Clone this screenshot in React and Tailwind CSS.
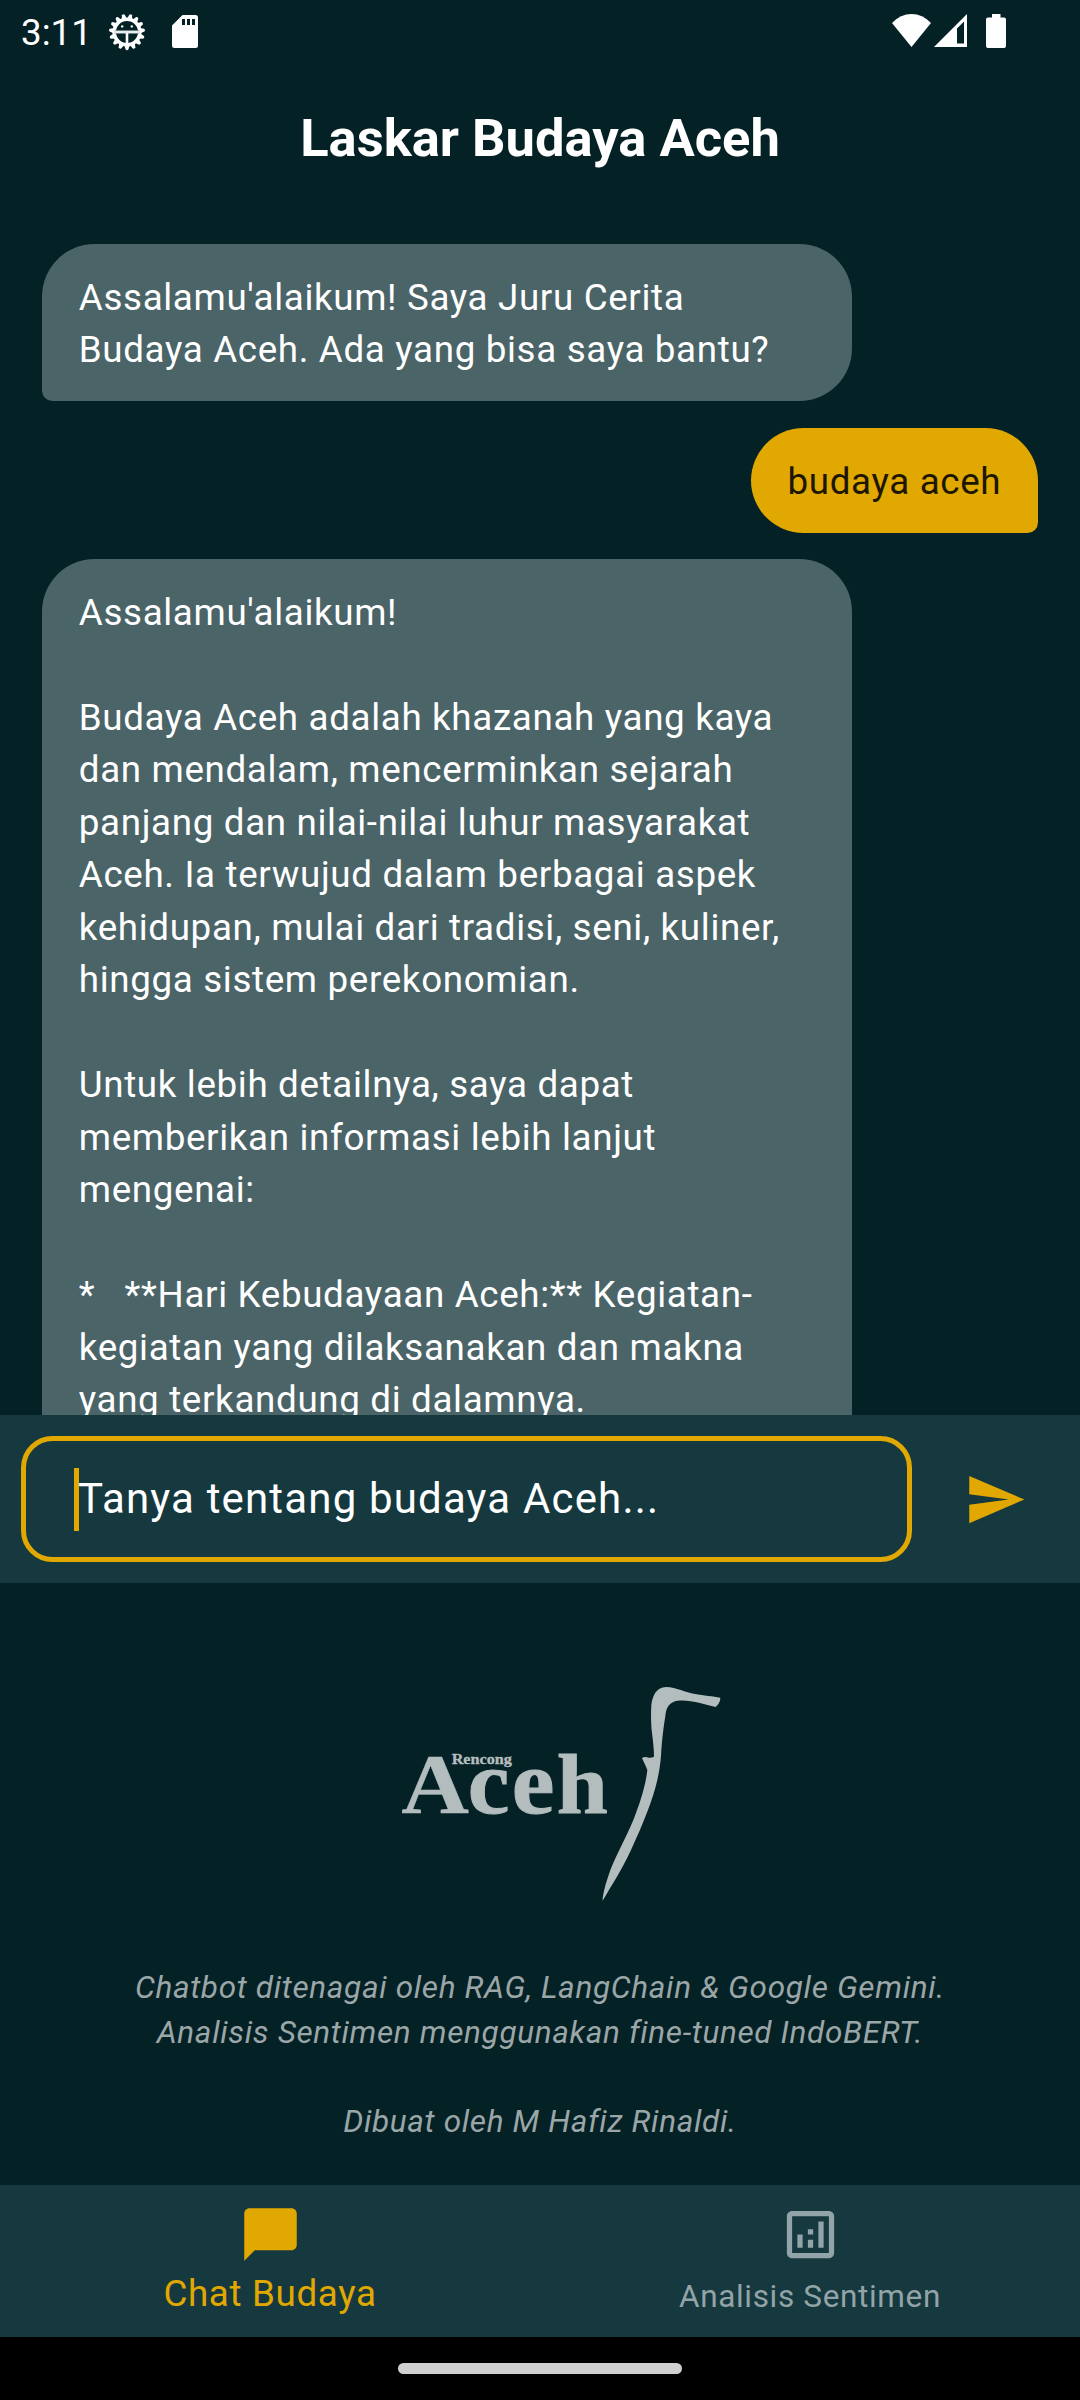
const reply = [
  "Assalamu'alaikum!",
  "",
  "Budaya Aceh adalah khazanah yang kaya",
  "dan mendalam, mencerminkan sejarah",
  "panjang dan nilai-nilai luhur masyarakat",
  "Aceh. Ia terwujud dalam berbagai aspek",
  "kehidupan, mulai dari tradisi, seni, kuliner,",
  "hingga sistem perekonomian.",
  "",
  "Untuk lebih detailnya, saya dapat",
  "memberikan informasi lebih lanjut",
  "mengenai:",
  "",
  "*   **Hari Kebudayaan Aceh:** Kegiatan-",
  "kegiatan yang dilaksanakan dan makna",
  "yang terkandung di dalamnya.",
].join("\n");

function DebugIcon() {
  const teeth = Array.from({ length: 15 }, (_, i) => 90 + i * 24);
  return (
    <svg className="h-[38px] w-[38px]" viewBox="-19 -19 38 38" fill="none">
      {teeth.map((a) => (
        <path key={a} transform={`rotate(${a})`} d="M13 -2.7L17.4 -1.4Q19 0 17.4 1.4L13 2.7Z" fill="#fff" />
      ))}
      <circle r="12.8" stroke="#fff" strokeWidth="3.6" />
      <path d="M-12.5 0H12.5" stroke="#9aa8aa" strokeWidth="3.4" />
      <path d="M-12.5 0H12.5" stroke="#fff" strokeWidth="1.6" />
      <path d="M0 1V13" stroke="#fff" strokeWidth="2.6" />
      <circle cx="-4.8" cy="-5.6" r="1.2" fill="#fff" />
      <circle cx="4.8" cy="-5.6" r="1.2" fill="#fff" />
    </svg>
  );
}

function StatusBar() {
  return (
    <div className="flex h-[63px] shrink-0 items-start justify-between pl-[21px] pr-[74px]">
      <div className="flex items-start">
        <span className="mt-[11px] w-[87px] text-[36.75px] leading-[44px]">3:11</span>
        <div className="mt-[12.5px]">
          <DebugIcon />
        </div>
        <svg className="ml-[26px] mt-[15px] h-[33px] w-[26px]" viewBox="0 0 26 33">
          <path
            fill="#fff"
            fillRule="evenodd"
            d="M10.5 0H23.5Q26 0 26 2.5V30.5Q26 33 23.5 33H2.5Q0 33 0 30.5V10.5ZM10 4V10H13V4ZM15 4V10H18V4ZM20 4V10H23V4Z"
          />
        </svg>
      </div>
      <div className="mt-[14px] flex items-start">
        <svg className="h-[33px] w-[39px]" viewBox="0 0 39 33">
          <path fill="#fff" d="M0 9Q8.5 0 19.5 0T39 9L19.5 33Z" />
        </svg>
        <svg className="ml-[3px] h-[33px] w-[33px]" viewBox="0 0 33 33">
          <path fill="#fff" fillRule="evenodd" d="M0 33L33 0V33ZM23 14.5V29.5H30V7.5Z" />
        </svg>
        <svg className="ml-[19px] h-[34px] w-[20px]" viewBox="0 0 20 34">
          <path fill="#fff" d="M6 0H14.5V3.5H18Q20 3.5 20 5.5V32Q20 34 18 34H2Q0 34 0 32V5.5Q0 3.5 2 3.5H6Z" />
        </svg>
      </div>
    </div>
  );
}

function BotBubble({ children }) {
  return (
    <div className="w-[810px] shrink-0 self-start whitespace-pre rounded-[52.5px] rounded-bl-[10.5px] bg-[#4a6468] px-[36.75px] pb-[24.5px] pt-[28px]">
      {children}
    </div>
  );
}

function Logo() {
  return (
    <svg className="h-[260px] w-[360px]" viewBox="0 0 1080 780" fill="#b3bdbe">
      <g fontFamily="'Liberation Serif', serif" fontWeight="700" stroke="#b3bdbe" strokeWidth="3">
        <text x="64" y="460" fontSize="257" strokeWidth="1" textLength="203" lengthAdjust="spacingAndGlyphs">A</text>
        <text x="263" y="459" fontSize="274" textLength="125" lengthAdjust="spacingAndGlyphs">c</text>
        <text x="395" y="459" fontSize="274" textLength="128" lengthAdjust="spacingAndGlyphs">e</text>
        <text x="530" y="459" fontSize="253" textLength="153" lengthAdjust="spacingAndGlyphs">h</text>
        <text x="215" y="312" fontSize="45" strokeWidth="1" textLength="181" lengthAdjust="spacingAndGlyphs">Rencong</text>
      </g>
      <path d="M1021 113L1020 122Q1016 134 1007 141Q985 136 960 129C930 122 900 119 882 125C864 132 858 148 856 168C850 205 846 240 844 270C843 300 838 335 832 360C818 420 790 490 752 572C725 630 695 675 668 722C667 715 672 685 685 648C700 600 735 540 760 480C782 425 798 370 802 330C798 318 790 305 786 294Q795 288 806 293Q815 294 822 290C822 270 820 250 816 220C812 190 813 150 814 135C818 105 830 82 858 81C890 82 915 97 945 102C970 107 1000 109 1021 113Z" />
    </svg>
  );
}

export default function App() {
  return (
    <div className="flex h-[2400px] w-[1080px] flex-col overflow-hidden bg-[#042125] font-['Roboto',sans-serif] text-white">
      <StatusBar />
      <header className="flex h-[147px] shrink-0 items-center justify-center pt-[2px]">
        <h1 className="text-[52.5px] font-bold leading-[60px]">Laskar Budaya Aceh</h1>
      </header>

      <main className="flex h-[1205px] shrink-0 flex-col gap-[26.25px] overflow-hidden px-[42px] pt-[33.75px] text-[36.75px] leading-[52.5px] tracking-[0.656px]">
        <BotBubble>{"Assalamu'alaikum! Saya Juru Cerita\nBudaya Aceh. Ada yang bisa saya bantu?"}</BotBubble>
        <div className="shrink-0 self-end rounded-[52.5px] rounded-br-[10.5px] bg-[#e0a800] px-[36.75px] pb-[24.5px] pt-[28px] text-[#1d1600]">
          budaya aceh
        </div>
        <BotBubble>{reply + "\n\n"}</BotBubble>
      </main>

      <div className="flex h-[168px] shrink-0 items-center bg-[#15393f] pl-[21px]">
        <div className="flex h-[126px] w-[891px] items-center rounded-[31.5px] border-[5.25px] border-[#e0a800] pl-[47.5px]">
          <span className="h-[63px] w-[5px] bg-[#e0a800]" />
          <span className="-ml-[0.5px] -mt-[1px] text-[42px] leading-[63px] tracking-[1.17px]">Tanya tentang budaya Aceh...</span>
        </div>
        <svg className="ml-[52px] h-[63px] w-[63px]" viewBox="0 0 24 24" fill="#e0a800">
          <path d="M2.01 21L23 12 2.01 3 2 10l15 2-15 2z" />
        </svg>
      </div>

      <footer className="flex h-[602px] shrink-0 flex-col items-center pt-[77px]">
        <div className="ml-[40px]">
          <Logo />
        </div>
        <p className="mt-[46px] whitespace-pre text-center text-[31.5px] italic leading-[44.625px] tracking-[0.656px] text-[#9ba6a8]">
          {"Chatbot ditenagai oleh RAG, LangChain & Google Gemini.\nAnalisis Sentimen menggunakan fine-tuned IndoBERT.\n\nDibuat oleh M Hafiz Rinaldi."}
        </p>
      </footer>

      <nav className="grid h-[152px] shrink-0 grid-cols-2 bg-[#15393f]">
        <div className="flex flex-col items-center pt-[18px] text-[#e0a800]">
          <svg className="h-[63px] w-[63px]" viewBox="0 0 24 24" fill="currentColor">
            <path d="M20 2H4c-1.1 0-2 .9-2 2v18l4-4h14c1.1 0 2-.9 2-2V4c0-1.1-.9-2-2-2z" />
          </svg>
          <span className="mt-[2px] text-[36.75px] leading-[52px] tracking-[0.656px]">Chat Budaya</span>
        </div>
        <div className="flex flex-col items-center pt-[18px] text-[#92a4a7]">
          <svg className="h-[63px] w-[63px]" viewBox="0 0 24 24" fill="currentColor">
            <path d="M19 3H5c-1.1 0-2 .9-2 2v14c0 1.1.9 2 2 2h14c1.1 0 2-.9 2-2V5c0-1.1-.9-2-2-2zm0 16H5V5h14v14zM7 12h2v5H7zM15 7h2v10h-2zM11 14h2v3h-2zM11 10h2v2h-2z" />
          </svg>
          <span className="mt-[8px] text-[31.5px] leading-[46px] tracking-[0.656px]">Analisis Sentimen</span>
        </div>
      </nav>

      <div className="flex h-[63px] shrink-0 items-center justify-center bg-black">
        <div className="h-[11px] w-[284px] rounded-full bg-[#d0d0d0]" />
      </div>
    </div>
  );
}
